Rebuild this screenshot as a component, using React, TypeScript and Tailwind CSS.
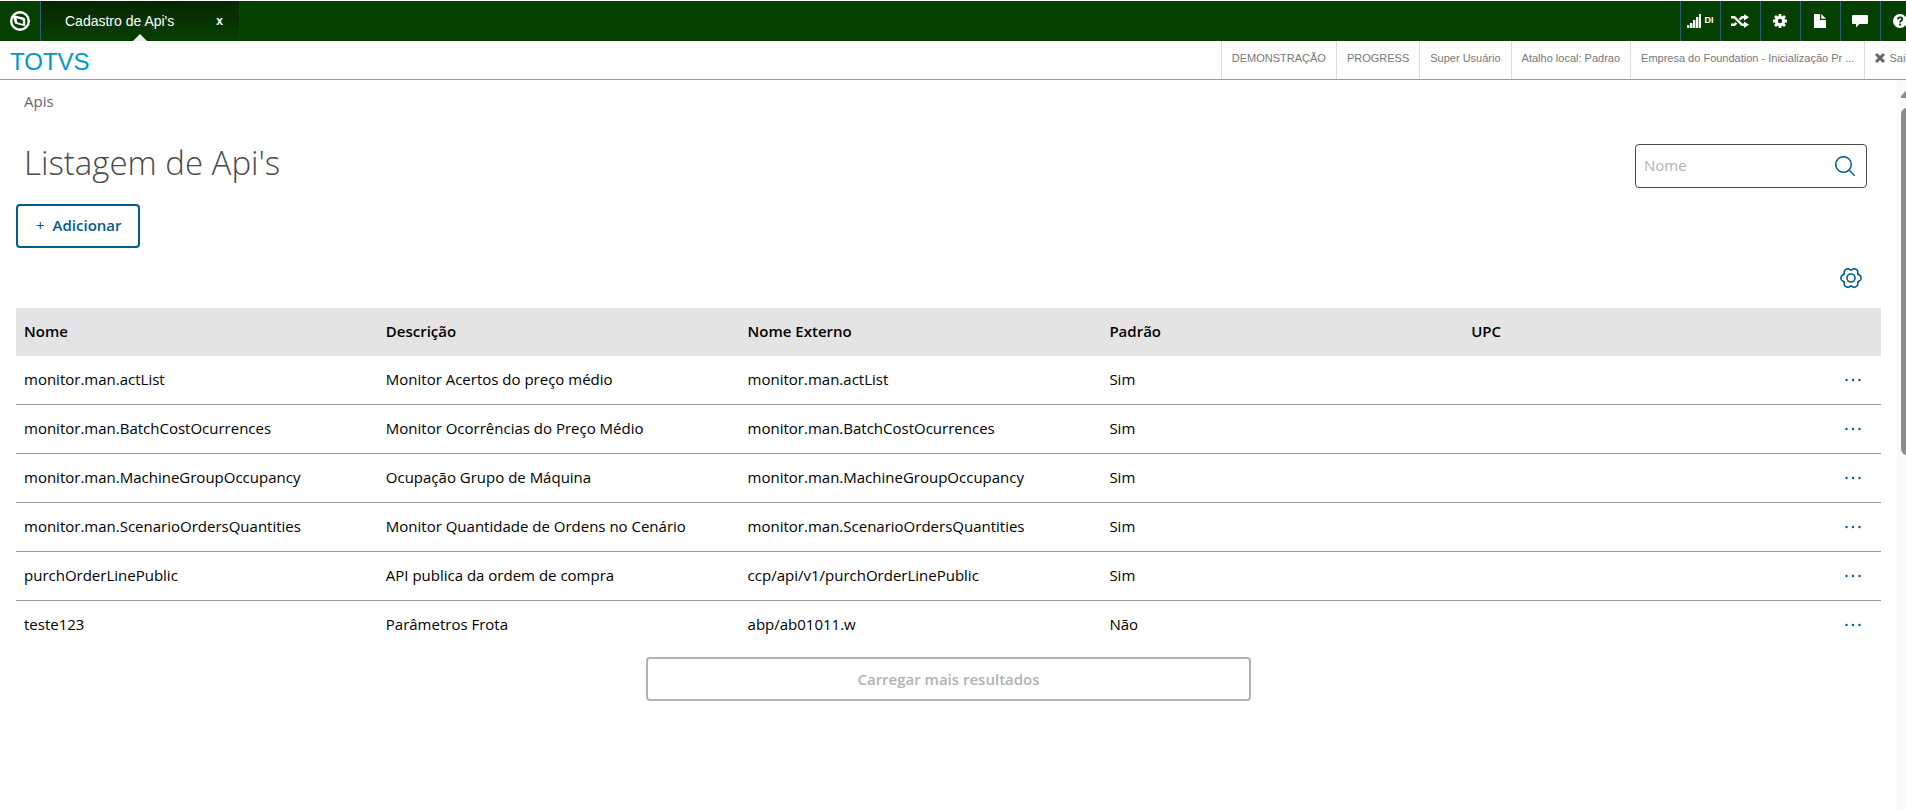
import { clsx } from 'clsx'

const apis = [
  { name: 'monitor.man.actList', description: 'Monitor Acertos do preço médio', externalName: 'monitor.man.actList', standard: 'Sim' },
  { name: 'monitor.man.BatchCostOcurrences', description: 'Monitor Ocorrências do Preço Médio', externalName: 'monitor.man.BatchCostOcurrences', standard: 'Sim' },
  { name: 'monitor.man.MachineGroupOccupancy', description: 'Ocupação Grupo de Máquina', externalName: 'monitor.man.MachineGroupOccupancy', standard: 'Sim' },
  { name: 'monitor.man.ScenarioOrdersQuantities', description: 'Monitor Quantidade de Ordens no Cenário', externalName: 'monitor.man.ScenarioOrdersQuantities', standard: 'Sim' },
  { name: 'purchOrderLinePublic', description: 'API publica da ordem de compra', externalName: 'ccp/api/v1/purchOrderLinePublic', standard: 'Sim' },
  { name: 'teste123', description: 'Parâmetros Frota', externalName: 'abp/ab01011.w', standard: 'Não' }
]

const columns = ['Nome', 'Descrição', 'Nome Externo', 'Padrão', 'UPC']

const sessionInfo = [
  'DEMONSTRAÇÃO',
  'PROGRESS',
  'Super Usuário',
  'Atalho local: Padrao',
  'Empresa do Foundation - Inicialização Pr ...'
]

function LogoIcon() {
  return (
    <svg viewBox="0 0 20 20" className="size-5">
      <circle cx="10" cy="10" r="8.8" fill="none" stroke="#fff" strokeWidth="2.4" />
      <path d="M3 5.400 5 4.400 13.400 6.600c1 .3 1.800.8 1.800 1.800v7l-2-.6-7-1.800c-1-.3-1.600-.9-1.600-1.800z" fill="#fff" />
      <path d="M6.800 7.200 12.800 8.900v4L8.600 11.700q-1.800-.6-1.800-2z" fill="#064000" />
    </svg>
  )
}

function SignalIcon() {
  return (
    <svg viewBox="0 0 14 14" className="size-3.5" fill="#fff">
      <path d="M0 11h2.400v3H0zM3 9h2.400v5H3zM6 6h2.400v8H6zM9 3h2.400v11H9zM12 0h2v14h-2z" />
    </svg>
  )
}

function ShuffleIcon() {
  return (
    <svg viewBox="0 0 18 14" className="h-3.5 w-4.5" fill="none" stroke="#fff" strokeWidth="2.400">
      <path d="M0 3.200h3.400L11 10.800h3M0 10.800h3.400l2-2M8.600 5.600l2.400-2.400h3" />
      <path d="M13 0l5 3.200-5 3.400zM13 7.400l5 3.400-5 3.200z" fill="#fff" stroke="none" />
    </svg>
  )
}

function CogIcon() {
  return (
    <svg viewBox="0 0 14 14" className="size-3.5">
      <circle cx="7" cy="7" r="3.700" fill="none" stroke="#fff" strokeWidth="3" />
      <path d="M7 0v3M7 11v3M0 7h3M11 7h3M2 2l2 2M10 10l2 2M12 2l-2 2M4 10l-2 2" stroke="#fff" strokeWidth="2.800" />
    </svg>
  )
}

function FileIcon() {
  return (
    <svg viewBox="0 0 12 14" className="h-3.5 w-3" fill="#fff">
      <path d="M0 .5Q0 0 .5 0H6v6h6v7.500q0 .5-.5.500H.5Q0 14 0 13.500zM7.200 0 12 4.800H7.200z" />
    </svg>
  )
}

function CommentIcon() {
  return (
    <svg viewBox="0 0 16 14" className="h-3.5 w-4" fill="#fff">
      <path d="M1 1h14q1 0 1 1v7q0 1-1 1H7.500L4 13.500V10H1q-1 0-1-1V2q0-1 1-1z" />
    </svg>
  )
}

function HelpIcon() {
  return (
    <svg viewBox="0 0 14 14" className="size-3.5">
      <circle cx="7" cy="7" r="7" fill="#fff" />
      <path d="M4.800 5.400Q4.900 3.300 7.100 3.300 9.300 3.400 9.300 5.200 9.200 6.300 8 6.900 7.100 7.400 7.100 8.500" fill="none" stroke="#064000" strokeWidth="1.800" />
      <path d="M6.100 9.600h2v1.900h-2z" fill="#064000" />
    </svg>
  )
}

function CloseIcon() {
  return (
    <svg viewBox="0 0 10 10" className="size-2.5" stroke="#666" strokeWidth="3">
      <path d="M1 1l8 8M9 1L1 9" />
    </svg>
  )
}

function SearchIcon() {
  return (
    <svg viewBox="0 0 20 20" className="size-5" fill="none" stroke="#045b8f" strokeWidth="1.500" strokeLinecap="round">
      <circle cx="8.500" cy="8.500" r="7.800" />
      <path d="M14 14l5.200 5.200" />
    </svg>
  )
}

function SettingsIcon() {
  return (
    <svg viewBox="0 0 22 20" className="h-5 w-5.5" fill="none" stroke="#045b8f" strokeWidth="1.600" strokeLinecap="round">
      {[30, 90, 150, 210, 270, 330].map((angle) => (
        <path
          key={angle}
          d="M7 3.070C8 2.500 8 .8 9.200.3Q11-.4 12.800.3C14 .8 14 2.500 15 3.070"
          transform={`rotate(${angle} 11 10)`}
        />
      ))}
      <circle cx="11" cy="10" r="4" />
    </svg>
  )
}

function MoreIcon() {
  return (
    <svg viewBox="0 0 16 4" className="h-1 w-4" fill="#045b8f">
      <circle cx="1.500" cy="2" r="1.200" />
      <circle cx="8" cy="2" r="1.200" />
      <circle cx="14.500" cy="2" r="1.200" />
    </svg>
  )
}

const tools = [
  { label: 'Programas aleatórios', icon: <ShuffleIcon /> },
  { label: 'Configurações', icon: <CogIcon /> },
  { label: 'Documentos', icon: <FileIcon /> },
  { label: 'Mensagens', icon: <CommentIcon /> },
  { label: 'Ajuda', icon: <HelpIcon /> }
]

function TopBar() {
  const toolClass = 'flex w-10 shrink-0 items-center justify-center border-l border-[#2d5c7e] pr-px text-white'

  return (
    <header className="-mr-3.5 mt-px flex h-10 bg-[#064000] font-['Liberation_Sans',sans-serif]">
      <button aria-label="Menu" className="flex w-10 items-center justify-center">
        <LogoIcon />
      </button>

      <div className="relative flex w-50 items-center justify-between border-x border-l-[#2d5c7e] border-r-[#1a3040] bg-linear-to-b from-[#062600] to-[#064000] pr-4 pl-6 text-sm text-white">
        <span>Cadastro de Api's</span>
        <button aria-label="Fechar aba" className="text-xs font-bold">x</button>
        <svg viewBox="0 0 14 7" className="absolute bottom-0 left-1/2 h-[7px] w-3.5 -translate-x-1/2" fill="#eee">
          <path d="M0 7l7-7 7 7z" />
        </svg>
      </div>

      <div className="ml-auto flex">
        <button aria-label="Conexão" className={clsx(toolClass, 'gap-1 text-[9px] font-bold')}>
          <SignalIcon />
          DI
        </button>
        {tools.map((tool) => (
          <button key={tool.label} aria-label={tool.label} className={toolClass}>
            {tool.icon}
          </button>
        ))}
      </div>
    </header>
  )
}

function SessionBar() {
  return (
    <div className="-mr-[13px] flex h-[39px] justify-between border-b border-[#999] font-['Liberation_Sans',sans-serif]">
      <span className="pl-2.5 text-2xl leading-[42px] text-[#0097d1]">TOTVS</span>

      <ul className="flex text-[11px] leading-[34px] text-[#777]">
        {sessionInfo.map((item) => (
          <li key={item} className="border-l border-[#ddd] px-2.5">
            {item}
          </li>
        ))}
        <li className="border-l border-[#ddd] px-2.5">
          <button className="flex items-center gap-1">
            <CloseIcon />
            Sair
          </button>
        </li>
      </ul>
    </div>
  )
}

function ApiTable() {
  return (
    <table className="w-full table-fixed border-separate border-spacing-0 text-left">
      <thead>
        <tr className="h-12 bg-[#e4e4e4]">
          {columns.map((column) => (
            <th key={column} className="px-2 pb-0.5 font-semibold">
              {column}
            </th>
          ))}
          <th className="w-14" />
        </tr>
      </thead>
      <tbody className="*:last:*:border-transparent">
        {apis.map((api) => (
          <tr key={api.name} className="h-[49px] *:border-b *:border-[#999]">
            <td className="px-2 pb-0.5">{api.name}</td>
            <td className="px-2 pb-0.5">{api.description}</td>
            <td className="px-2 pb-0.5">{api.externalName}</td>
            <td className="px-2 pb-0.5">{api.standard}</td>
            <td className="px-2 pb-0.5" />
            <td className="pl-5">
              <button aria-label={`Ações de ${api.name}`} className="block">
                <MoreIcon />
              </button>
            </td>
          </tr>
        ))}
      </tbody>
    </table>
  )
}

export default function App() {
  return (
    <div className="flex min-h-screen flex-col overflow-x-hidden bg-white">
      <TopBar />
      <SessionBar />

      <div className="flex flex-1 font-['Open_Sans',sans-serif] text-[15px] text-black">
        <main className="min-w-0 flex-1 px-4">
          <nav className="px-2 pt-2 leading-[26px] text-[#666]">Apis</nav>

          <div className="mt-[30px] flex items-center justify-between pr-3.5 pl-2">
            <h1 className="pb-1.5 text-[33px] leading-9 font-light text-[#4a4a4a]">Listagem de Api's</h1>
            <label className="flex h-11 w-58 items-center rounded-sm border border-[#4a4a4a] pr-[11px] pl-2">
              <input
                type="text"
                aria-label="Nome"
                placeholder="Nome"
                className="min-w-0 flex-1 pb-0.5 outline-none placeholder:text-[#b2b2b2]"
              />
              <SearchIcon />
            </label>
          </div>

          <button className="mt-4 flex h-11 items-center gap-2 rounded-sm border-2 border-[#045b8f] pr-4 pb-0.5 pl-[18px] font-semibold text-[#045b8f]">
            <span className="font-normal">+</span>
            Adicionar
          </button>

          <div className="mt-5 flex justify-end pr-[19px] pb-5">
            <button aria-label="Gerenciador de colunas" className="block">
              <SettingsIcon />
            </button>
          </div>

          <ApiTable />

          <div className="mt-[7px] px-6">
            <button
              disabled
              className="mx-auto block h-11 w-1/3 rounded-sm border-2 border-[#b2b2b2] font-semibold text-[#b2b2b2]"
            >
              Carregar mais resultados
            </button>
          </div>
        </main>

        <div aria-hidden="true" className="-mr-3.5 w-[23px] bg-[#fafafa] px-1 pt-2">
          <svg viewBox="0 0 15 10" className="h-2.5 w-[15px]" fill="#8b8b8b">
            <path d="M7.500 0 15 8q0 2-1 2H1q-1.500 0-1-2z" />
          </svg>
          <div className="mt-2.5 h-[347px] rounded-md bg-[#8b8b8b]" />
        </div>
      </div>
    </div>
  )
}
